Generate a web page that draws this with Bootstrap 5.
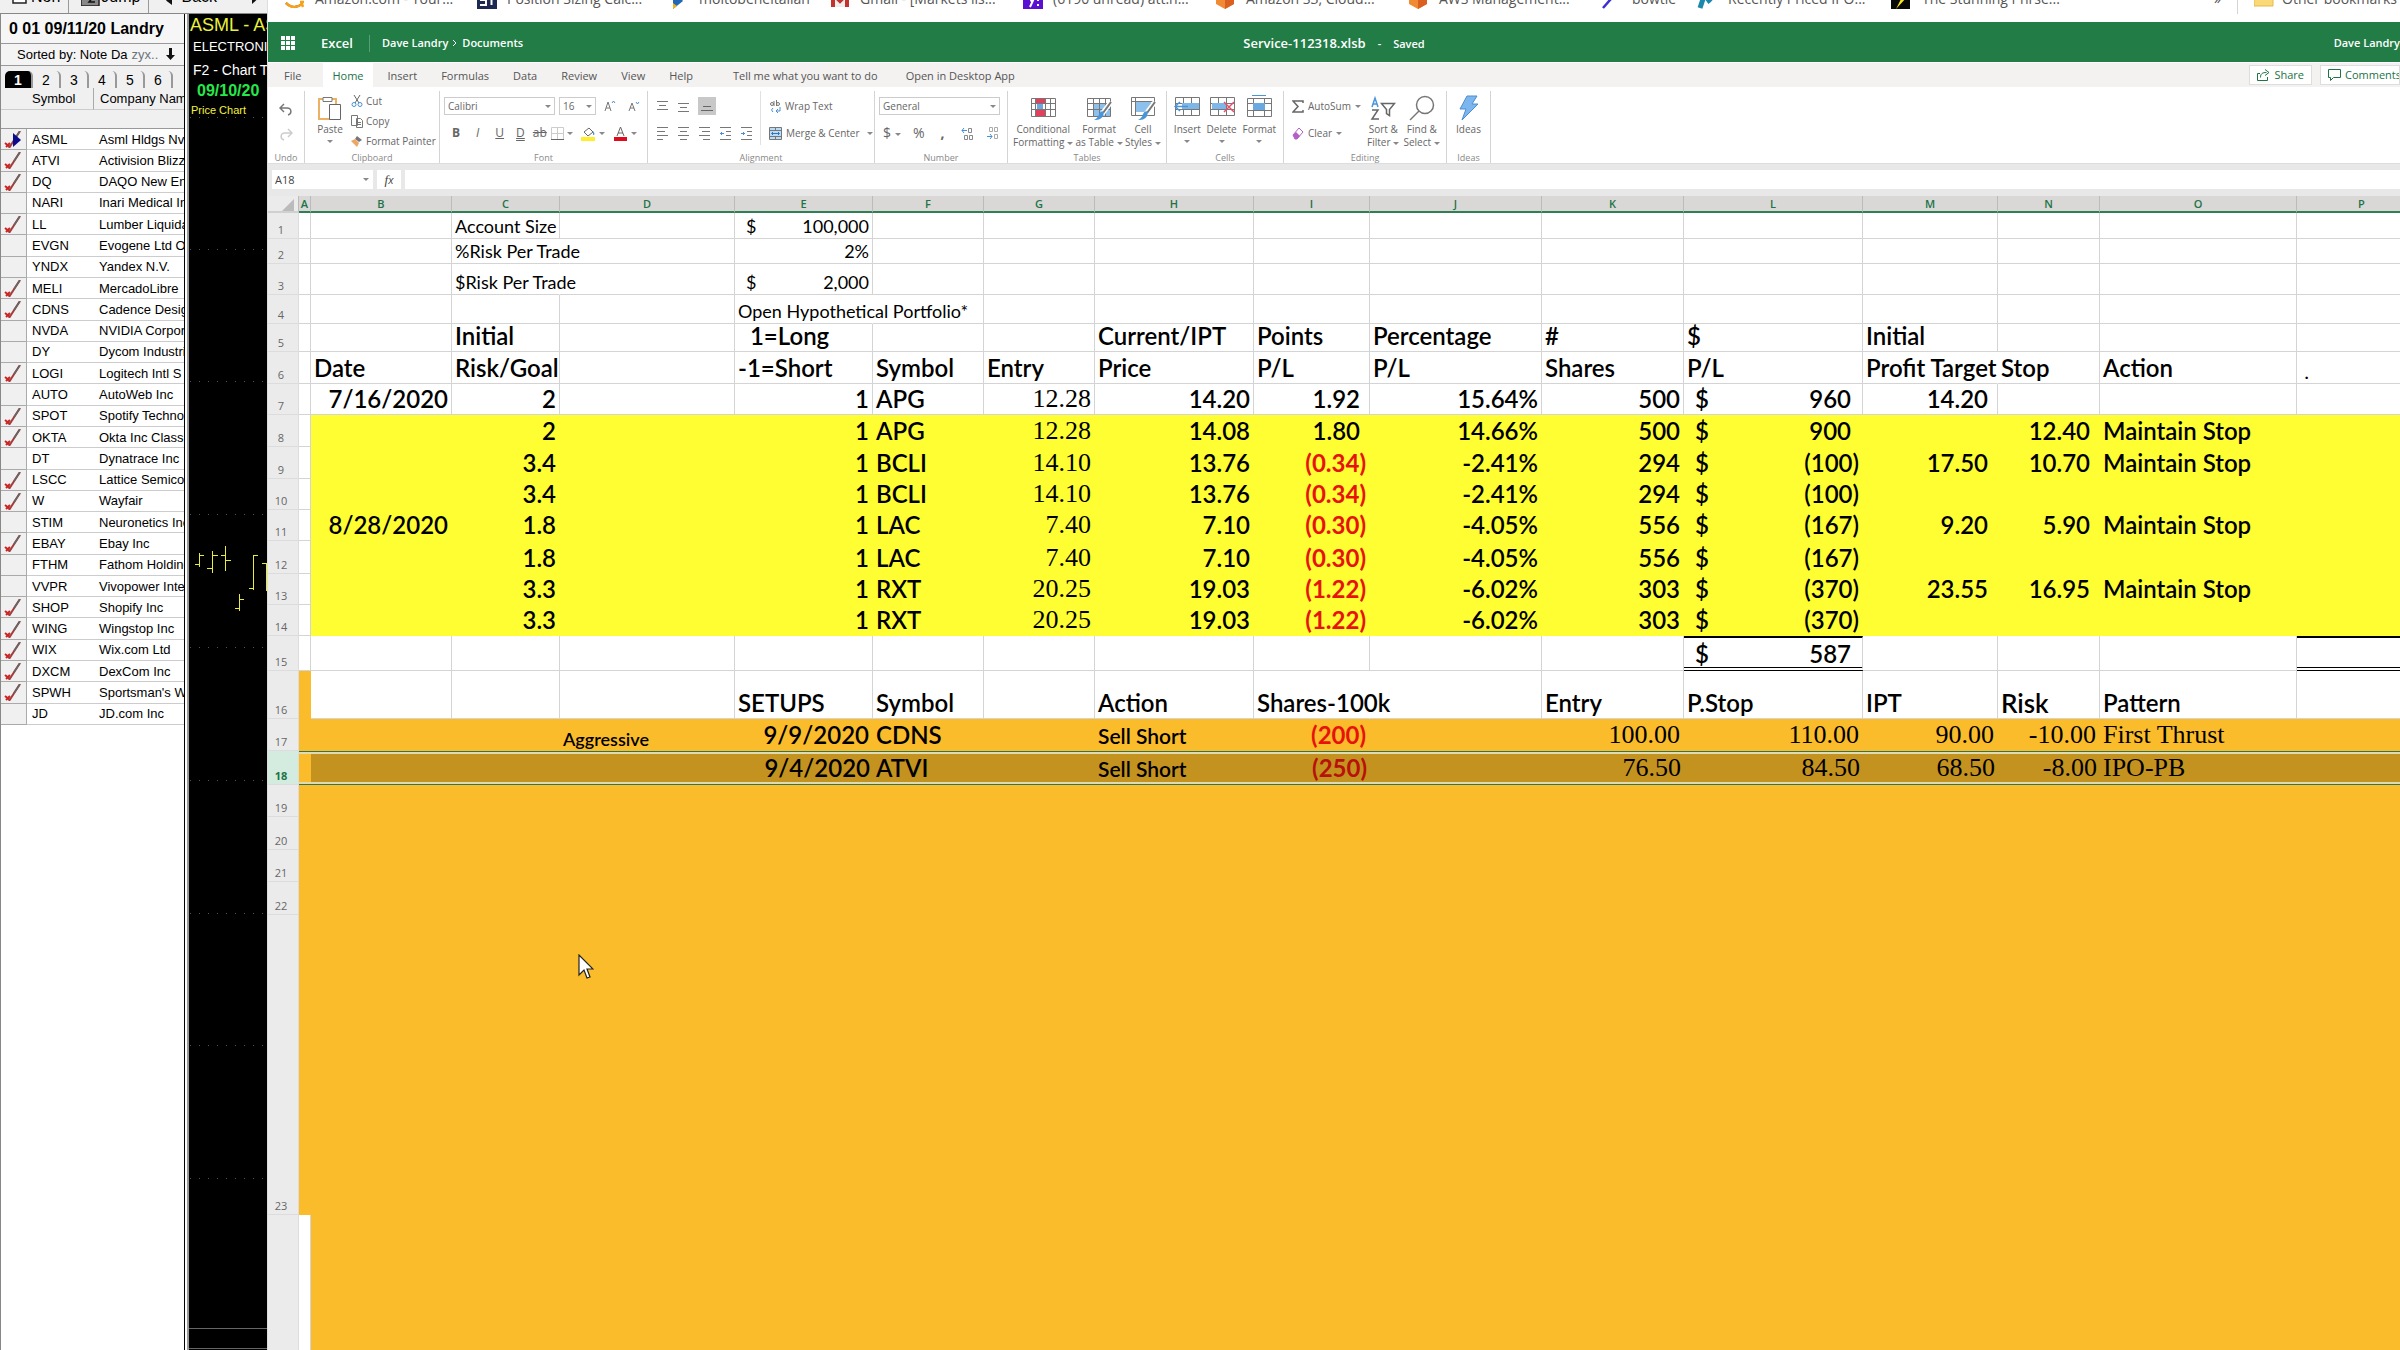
<!DOCTYPE html>
<html lang="en">
<head>
<meta charset="utf-8">
<meta name="viewport" content="width=device-width, initial-scale=1">
<title>Service-112318.xlsb</title>
<link href="https://cdn.jsdelivr.net/npm/bootstrap@5.3.0/dist/css/bootstrap.min.css" rel="stylesheet">
<style>
body{font-family:"Open Sans","Noto Sans",sans-serif;font-size:10px;line-height:12px;color:#444;height:100vh}
a{text-decoration:none;color:inherit}
button,select,input{font:inherit;color:inherit}
svg{flex:none;display:block}
/* charting application, left */
.scan{width:267px;font-family:"Liberation Sans",sans-serif;font-size:13px;color:#000;background:#f0f0f0}
.scan-tools{height:14px;border-bottom:1px solid #888}
.scan-tools>button{border:0;background:none;padding:0;height:18px;line-height:18px;margin-top:-12px;font-size:16px}
.scan-tools>i{width:1px;background:#999}
.scan-list{width:189px;border-left:1px solid #888;border-right:2px solid #999;background:#fff}
.scan-in{width:184px;border-right:1px solid #000}
.scan-title{height:29px;line-height:30px;font-size:16px;background:#f6f6f6}
.scan-sort{height:23px;line-height:22px;border-top:1px solid #999;border-bottom:1px solid #999;background:#f4f4f4}
.scan-pages{height:22px;background:#f0f0f0;font-size:14px}
.scan-pages>button{border:0;background:none;padding:0;width:28px;height:17px;line-height:19px;margin-top:5px;border-right:2px solid #999;border-radius:0 5px 0 0}
.scan-pages>button.on{background:#000;color:#fff;font-weight:bold;border-radius:5px 5px 0 0}
.scan-table{table-layout:fixed;width:183px;border-collapse:separate;border-spacing:0;line-height:16px}
.scan-table th,.scan-table td{padding:0;white-space:nowrap;overflow:hidden;font-weight:400;border-bottom:1px solid #ccc}
.scan-table thead th{background:#f0f0f0;height:22px;line-height:20px}
.scan-table thead tr+tr th{height:19px;border-bottom-color:#999}
.scan-table.rows{height:596px}
.scan-table tbody td{padding-top:1px}
.scan-table tbody td:first-child{background:#f0f0f0;border-right:1px solid #aaa;border-bottom-color:#aaa}
.scan-table td+td,.scan-table th+th{padding-left:5px}
.scan-table td+td+td,.scan-table th+th+th{padding-left:6px}
.scan-table thead tr:first-child th+th+th{border-left:1px solid #aaa}
.chart{background:#000;color:#fff}
.chart>svg{position:absolute;left:0;top:0}
.chart>div{position:relative;white-space:nowrap;overflow:hidden;height:22px;line-height:22px}
.chart .tick-name{color:#eaf03c;font-size:18px;padding-left:1px}
.chart .tick-date{color:#25e84a;font-size:16px}
.chart .tick-kind{color:#f4f23a;font-size:11px;line-height:17px;padding-left:2px}
/* workbook window */
.book{border-left:1px solid #ddd;background:#fff;min-width:0}
.marks{height:22px;font-size:14px;line-height:20px;color:#555;padding-left:15px;white-space:nowrap}
.marks>a{width:193px;height:20px;margin-top:-11px}
.marks>a.mid{width:160px}
.marks>a.short{width:95px}
.marks>a.last{width:146px}
.marks>.more{margin-top:-11px}
.titlebar{height:40px;background:#217c45;color:#fff;font-size:11px;font-weight:600;padding-top:2px}
.titlebar .big{font-size:13px}
.titlebar .dash{padding:0 12px}
.tabs{height:25px;background:#f3f2f1;font-size:11px;line-height:23px;border-top:1px solid #fff}
.tabs .nav-link{padding:0 12px;color:#555;line-height:25px}
.tabs .nav-link.active{background:#fff;color:#217346;padding:0 9px;margin:0 3px 0 10px}
.tabs .act{border:1px solid #ddd;background:#fff;color:#217346;height:20px;line-height:18px;padding:0 7px;margin-top:2px}
.tabs .act.cut{width:80px}
.ribbon{height:77px;border-bottom:1px solid #ddd;color:#666}
.grp{height:72px;margin-top:4px;border-right:1px solid #d4d4d4;display:flex;flex-direction:column}
.grp>small{font-size:9px;line-height:10px;text-align:center;color:#888;margin-top:auto}
.grp button{border:0;background:none;padding:0;white-space:nowrap}
.grp .line{display:flex;gap:3px;height:20px;align-items:center}
.tall{display:flex;flex-direction:column;align-items:center;line-height:13px}
.tall>svg{height:26px;margin-bottom:2px}
.row-a,.row-b{display:flex;align-items:center;height:30px}
.row-b{height:24px}
.car{display:inline-block;border:3px solid transparent;border-top-color:#888;border-bottom:0;vertical-align:middle;margin-left:3px}
.pick{position:relative;display:inline-block}
.pick select,.pick input{appearance:none;border:1px solid #ccc;border-radius:0;background:#fff;height:18px;padding:0 3px;width:100%;display:block}
.pick::after{content:"";position:absolute;right:4px;top:8px;border:3px solid transparent;border-top-color:#888;border-bottom:0}
.pick.face{width:111px}.pick.size{width:37px}.pick.fmt{width:121px}
.glyph button{font-size:12px}
.glyph .dbl{text-decoration:underline double}
.w-undo{width:37px}.w-clip{width:135px}.w-font{width:208px}.w-align{width:227px}.w-num{width:133px}.w-tab{width:159px}.w-cell{width:117px}.w-edit{width:163px}.w-idea{width:44px}
.w-para{width:113px}.w-sum{width:83px}
.numrow{gap:12px;font-size:14px}
.fbar{background:#e8e8e8;padding:6px 0 7px 4px;font-size:11px}
.fbar .pick{width:101px}
.fbar input{border:0!important;height:19px!important;background:#fff}
.fbar button{width:24px;border:0;background:#fff;padding:0}
.fbar button span{font-family:"Liberation Serif",serif;font-size:13px}
/* sheet */
.sheet{table-layout:fixed;width:2159px;border-collapse:separate;border-spacing:0;color:#000;font-family:Lato,"Open Sans",sans-serif;font-size:24px;line-height:24px;font-weight:600}
.sheet th,.sheet td{padding:0 3px 3px;white-space:nowrap;vertical-align:bottom;border-right:1px solid #d4d4d4;border-bottom:1px solid #d4d4d4}
.sheet thead th{height:17px;padding:0;line-height:14px;font-size:11px;font-weight:600;font-family:"Open Sans",sans-serif;text-align:center;background:#d9d8d7;color:#217346;border-right-color:#bbb;border-bottom:2px solid #2f7f55}
.sheet thead th:first-child{background:#ebebeb;border-bottom-color:#d0d0d0}
.sheet tbody th{background:#ebebeb;color:#666;font:400 11px/13px "Open Sans",sans-serif;text-align:center;padding:0 4px 2px 0;border-color:#dcdcdc}
.sheet .sm td{font-size:18px;line-height:22px;font-weight:400;padding-bottom:1px}
.sheet td.sm-t{font-size:18px;line-height:20px;padding-bottom:1px}
.sheet td.md-t{font-size:21px;line-height:22px}
.sheet td.sp{border-right-color:transparent}
.sheet td.yel{background:#fffe33;border-color:#fffe33}
.sheet td.ora{background:#fabc2a;border-color:#fabc2a}
.sheet td.rt{text-align:right}
.sheet td.ac{text-align:right;padding-right:9px}
.sheet td.neg{text-align:right;color:#e8120c;font-weight:700}
.sheet td.ser{font-family:"Liberation Serif",serif;font-size:26px;font-weight:400}
.sheet td.tot{border-top:2px solid #000;border-bottom:4px double #000;padding-bottom:1px}
.sheet td.heavy{font-size:26px;font-weight:600}
.sheet .sel th{background:#d3ecdf;color:#217346;font-weight:700}
.sheet .sel td{border:0;padding-bottom:5px;box-shadow:inset 0 1px #36714a,inset 0 3px #dcddb4,inset 0 -1px #36714a,inset 0 -3px #dcddb4}
.sheet .sel td.drk{background:#c4931f}
.sheet .sel td.neg{color:#b8100a}
.pointer{position:absolute;left:578px;top:954px}
</style>
<script src="https://cdn.jsdelivr.net/npm/bootstrap@5.3.0/dist/js/bootstrap.bundle.min.js"></script>
</head>
<body class="d-flex overflow-hidden position-relative">

<section class="scan d-flex flex-column flex-shrink-0 overflow-hidden">
  <div class="scan-tools d-flex overflow-hidden">
    <button class="d-flex ms-2 ps-1 gap-1"><svg width="15" height="16"><path d="M1 1h13v14H1zM3 5h9M3 8h9M3 11h9" fill="#fff" stroke="#222" stroke-width="1.5"/></svg>Non</button>
    <i class="ms-2"></i>
    <button class="d-flex ms-2 ps-1"><svg width="20" height="18"><path d="M0 6h8V2h10v16H0z" fill="#888" stroke="#222" stroke-width="1.5"/><path d="M8 8h5l-5 6h6" fill="none" stroke="#111" stroke-width="1.5"/></svg>Jump</button>
    <i class="ms-2"></i>
    <button class="d-flex ms-3 gap-2"><svg width="8" height="18"><path d="M7 8v9L1 12.500z" fill="#111"/></svg>Back</button>
    <button class="ms-auto me-2" aria-label="Forward"><svg width="8" height="18"><path d="M1 7v9l5-4.500z" fill="#111"/></svg></button>
  </div>
  <div class="d-flex flex-grow-1">
    <div class="scan-list flex-shrink-0">
      <div class="scan-in overflow-hidden h-100">
        <div class="scan-title fw-bold text-nowrap ps-1"><span class="ms-1">0 01 09/11/20 Landry</span></div>
        <div class="scan-sort d-flex align-items-center ps-3 text-nowrap">Sorted by: Note Da<span class="ps-1 text-secondary">zyx..</span><svg class="ms-2" width="9" height="13"><path d="M3 0h3v7h3L4.500 12 0 7h3z" fill="#111"/></svg></div>
        <div class="scan-pages d-flex ps-1"><button class="on">1</button><button>2</button><button>3</button><button>4</button><button>5</button><button>6</button></div>
        <table class="scan-table">
          <colgroup><col style="width:26px"><col style="width:66px"><col></colgroup>
          <thead><tr><th></th><th>Symbol</th><th>Company Name</th></tr><tr><th></th><th></th><th></th></tr></thead>
        </table>
        <table class="scan-table rows">
          <colgroup><col style="width:26px"><col style="width:66px"><col></colgroup>
          <tbody id="watch"></tbody>
        </table>
      </div>
    </div>
    <div class="chart flex-grow-1 position-relative overflow-hidden">
      <svg width="78" height="1336" fill="none">
        <path d="M0 103.500h78M0 235.500h78M0 367.500h78M0 500.500h78M0 633.500h78M0 766.500h78M0 899.500h78M0 1031.500h78M0 1164.500h78" stroke="#555" stroke-dasharray="1 8" stroke-dashoffset="-1"/>
        <path d="M0 1314.500h78M0 1334.500h78" stroke="#666"/>
        <path d="M10.500 539v14M6 550.500h4M10 541.500h5M23.500 537v22M18 554.500h5M23 541.500h6M36.500 532v25M32 541.500h4M36 546.500h6M50.500 580v17M46 594.500h4M50 585.500h5M64.500 541v35M60 574.500h4M64 541.500h5M73 549.500h5M77.500 549v28" stroke="#e8ec3c"/>
      </svg>
      <div class="tick-name">ASML - ASML</div>
      <div class="ps-1">ELECTRONIC</div>
      <div class="ps-1 fs-6 lh-base"><span class="small">F2 - Chart T</span></div>
      <div class="tick-date ps-2 fw-bold">09/10/20</div>
      <div class="tick-kind">Price Chart</div>
    </div>
  </div>
</section>

<main class="book flex-grow-1 overflow-hidden">
  <nav class="marks d-flex overflow-hidden">
    <a href="#" class="d-flex"><svg class="me-2" width="24" height="20"><path d="M8 8c4-4 9-2 8 2M3 14c5 5 11 5 16 1" fill="none" stroke="#222" stroke-width="2"/><path d="M3 14c5 5 11 5 16 1l1 3M17 13l4 0" fill="none" stroke="#f6a21d" stroke-width="2.500"/></svg>Amazon.com - Your...</a>
    <a href="#" class="d-flex"><svg class="me-2" width="23" height="20"><path d="M1 0h20v20H1z" fill="#1d2b52"/><path d="M10 6H5v5h5v5H4M12 6h7M15.500 6v10" fill="none" stroke="#fff" stroke-width="2"/></svg>Position Sizing Calc...</a>
    <a href="#" class="d-flex mid"><svg class="me-2" width="22" height="20"><path d="M4 0v20l10-8z" fill="#2268b5"/><path d="M4 14v6l4-3z" fill="#f1b31c"/></svg>moltobeneitalian</a>
    <a href="#" class="d-flex"><svg class="me-2" width="23" height="20"><path d="M2 4h18v14H2z" fill="#eee"/><path d="M4 18V5l7 7 7-7v13" fill="none" stroke="#c3322d" stroke-width="4"/></svg>Gmail - [Markets lis...</a>
    <a href="#" class="d-flex"><svg class="me-2" width="23" height="20"><path d="M1 0h20v20H1z" fill="#5b0fd0"/><path d="M6 5l4 8M14 5L8 18M16 5v7M16 15v2" fill="none" stroke="#fff" stroke-width="2"/></svg>(6190 unread) att.n...</a>
    <a href="#" class="d-flex"><svg class="me-2" width="23" height="20"><path d="M10 0l9 4v11l-9 5-9-5V4z" fill="#f08a33"/><path d="M10 9v11l9-5V4z" fill="#d9601f"/></svg>Amazon S3, Cloud...</a>
    <a href="#" class="d-flex"><svg class="me-2" width="23" height="20"><path d="M10 0l9 4v11l-9 5-9-5V4z" fill="#f08a33"/><path d="M10 9v11l9-5V4z" fill="#d9601f"/></svg>AWS Management...</a>
    <a href="#" class="d-flex short"><svg class="me-2" width="23" height="20"><path d="M2 19L16 3" stroke="#3a2fd0" stroke-width="2.500"/></svg>bowtie</a>
    <a href="#" class="d-flex"><svg class="me-2" width="24" height="20"><path d="M4 19L9 4h5q4 4-3 9" fill="none" stroke="#1c88ae" stroke-width="5"/></svg>Recently Priced IPO...</a>
    <a href="#" class="d-flex me-auto"><svg class="me-2" width="25" height="20"><path d="M2 0h19v20H2z" fill="#080808"/><path d="M14 0L8 10h4L7 20l11-12h-4l4-8z" fill="#f7e21c"/></svg>The Stunning Phrse...</a>
    <span class="more pe-3">»</span>
    <span class="vr" style="height:9px"></span>
    <a href="#" class="d-flex ms-3 last"><svg class="me-2" width="20" height="18"><path d="M0 1h8l2 3h9v13H0z" fill="#f9d978" stroke="#e5b94d"/></svg>Other bookmarks</a>
  </nav>

  <header class="titlebar d-flex align-items-center">
    <div class="d-flex align-items-center col">
      <button class="btn p-0 border-0 ms-2 me-4 ps-1 rounded-0" aria-label="App launcher"><svg width="17" height="14" fill="#fff"><path d="M1 0h4v4H1zM6 0h4v4H6zM11 0h4v4h-4zM1 5h4v4H1zM6 5h4v4H6zM11 5h4v4h-4zM1 10h4v4H1zM6 10h4v4H6zM11 10h4v4h-4z"/></svg></button>
      <a href="#" class="big">Excel</a><span class="vr ms-3 me-2" style="height:17px"></span>
      <a href="#" class="ms-1">Dave Landry</a><svg class="mx-1" width="6" height="8"><path d="M1 1l3 3-3 3" stroke="#fff" fill="none"/></svg><a href="#">Documents</a>
    </div>
    <div><span class="big">Service-112318.xlsb</span><span class="dash">-</span>Saved</div>
    <div class="col text-end"><a href="#">Dave Landry</a></div>
  </header>

  <div class="tabs d-flex">
    <nav class="nav flex-nowrap text-nowrap ps-1">
      <a class="nav-link" href="#">File</a><a class="nav-link active" href="#">Home</a><a class="nav-link" href="#">Insert</a><a class="nav-link" href="#">Formulas</a><a class="nav-link" href="#">Data</a><a class="nav-link" href="#">Review</a><a class="nav-link" href="#">View</a><a class="nav-link" href="#">Help</a><a class="nav-link ms-3" href="#">Tell me what you want to do</a><a class="nav-link ms-1" href="#">Open in Desktop App</a>
    </nav>
    <button class="act d-flex gap-1 align-items-center ms-auto me-2"><svg width="13" height="12" fill="none" stroke="#217346"><path d="M3 4.500H.500v7h10V8M3.500 8.500c0-4 2-5 6-5M8 .500l4 3-4 3"/></svg>Share</button>
    <button class="act cut d-flex gap-1 align-items-center pe-0 text-nowrap overflow-hidden"><svg width="13" height="12" fill="none" stroke="#217346"><path d="M.500.500h12v8h-7l-3 3v-3h-2z"/></svg>Comments</button>
  </div>

  <div class="ribbon d-flex">
    <div class="grp w-undo align-items-center">
      <button class="mt-2 pt-1" aria-label="Undo"><svg width="14" height="13" fill="none" stroke="#777" stroke-width="1.500"><path d="M5 1L1 5l4 4M1 5h7c5 0 5 6 1 7"/></svg></button>
      <button class="mt-2 pt-1" aria-label="Redo"><svg width="14" height="13" fill="none" stroke="#ccc" stroke-width="1.500"><path d="M9 1l4 4-4 4M13 5H6C1 5 1 11 5 12"/></svg></button>
      <small>Undo</small>
    </div>
    <div class="grp w-clip">
      <div class="d-flex">
        <button class="tall ms-2 ps-1 mt-1"><svg width="26" height="26" fill="none"><path d="M2 4h17v20H2z" stroke="#eeb062" stroke-width="2"/><path d="M6 2.500h9v4H6z" fill="#fff" stroke="#777"/><path d="M12.500 9.500h11v15h-11z" fill="#fff" stroke="#666"/></svg>Paste<span class="car m-0 mt-1"></span></button>
        <div class="d-flex flex-column align-items-start ms-2">
          <button class="line"><svg width="12" height="12" fill="none"><path d="M3 0l5 8M9 0L4 8" stroke="#666"/><circle cx="3" cy="9.500" r="2" stroke="#4a90d0"/><circle cx="9" cy="9.500" r="2" stroke="#4a90d0"/></svg>Cut</button>
          <button class="line"><svg width="12" height="13" fill="#fff" stroke="#777"><path d="M.500.500h6v10h-6zM5.500 3.500h4l2 2v7h-6zM7 7.500h3M7 9.500h3"/></svg>Copy</button>
          <button class="line"><svg width="12" height="12"><path d="M6 1l5 4-3 2-4-3z" fill="#777"/><path d="M0 6l4-2 4 4-2 4z" fill="#eda665"/></svg>Format Painter</button>
        </div>
      </div>
      <small>Clipboard</small>
    </div>
    <div class="grp w-font">
      <div class="row-a gap-1 ps-1">
        <label class="pick face" aria-label="Font"><select><option>Calibri</option></select></label>
        <label class="pick size" aria-label="Font size"><select><option>16</option></select></label>
        <button class="ms-1" aria-label="Grow font"><svg width="12" height="12" fill="none" stroke="#777"><path d="M1 11l3-9 3 9M2 8h4"/><path d="M8 3l1.500-2L11 3" stroke="#4a90d0"/></svg></button>
        <button class="ms-1 ps-1" aria-label="Shrink font"><svg width="12" height="12" fill="none" stroke="#777"><path d="M1 11l3-8 3 8M2 8h4"/><path d="M8 2l1.500 2L11 2" stroke="#4a90d0"/></svg></button>
      </div>
      <div class="row-b glyph ps-2">
        <button class="fw-bold ps-1 pe-2">B</button><button class="fst-italic px-2">I</button><button class="px-1 ms-1 text-decoration-underline">U</button><button class="px-1 ms-1 dbl">D</button><button class="px-1 text-decoration-line-through">ab</button>
        <button class="d-flex align-items-center" aria-label="Borders"><svg width="13" height="13" fill="none"><path d="M.500.500h12v12M.500.500v12M6.500 0v12M0 6.500h12" stroke="#ccc"/><path d="M0 12.500h13" stroke="#666"/></svg><span class="car"></span></button>
        <button class="d-flex align-items-center ms-2" aria-label="Fill colour"><svg width="15" height="15"><path d="M3 6l5-4 4 4-5 4z" fill="#fff" stroke="#666"/><path d="M12 5q3 4 0 4" fill="#4a90d0"/><path d="M0 11h14v4H0z" fill="#ffee2e"/></svg><span class="car"></span></button>
        <button class="d-flex align-items-center ms-2" aria-label="Font colour"><svg width="15" height="15"><path d="M4 10l3.500-9L11 10M5 7h5" fill="none" stroke="#666"/><path d="M1 11h13v4H1z" fill="#e00b1c"/></svg><span class="car"></span></button>
      </div>
      <small>Font</small>
    </div>
    <div class="grp w-align">
      <div class="d-flex">
        <div class="w-para border-end ps-2">
          <div class="row-a gap-2">
            <button aria-label="Top align"><svg width="13" height="18" stroke="#777"><path d="M1 4.500h11M3 8.500h7M1 12.500h11"/></svg></button>
            <button aria-label="Middle align"><svg width="13" height="18" stroke="#777"><path d="M1 6.500h11M3 10.500h7M1 14.500h11"/></svg></button>
            <button aria-label="Bottom align" style="background:#c8c8c8"><svg width="18" height="18" stroke="#666"><path d="M5 9.500h8M3 13.500h12"/></svg></button>
          </div>
          <div class="row-b gap-2">
            <button aria-label="Left"><svg width="13" height="13" stroke="#777"><path d="M1 .500h11M1 4.500h8M1 8.500h11M1 12.500h6"/></svg></button>
            <button aria-label="Center"><svg width="13" height="13" stroke="#777"><path d="M1 .500h11M3 4.500h7M1 8.500h11M3 12.500h7"/></svg></button>
            <button aria-label="Right"><svg width="13" height="13" stroke="#777"><path d="M1 .500h11M4 4.500h8M1 8.500h11M5 12.500h7"/></svg></button>
            <button aria-label="Decrease indent"><svg width="13" height="13" stroke="#777" fill="none"><path d="M1 .500h11M7 4.500h5M7 8.500h5M1 12.500h11"/><path d="M5 6.500H1M3 5L1.500 6.500 3 8" stroke="#4a90d0"/></svg></button>
            <button aria-label="Increase indent"><svg width="13" height="13" stroke="#777" fill="none"><path d="M1 .500h11M7 4.500h5M7 8.500h5M1 12.500h11"/><path d="M1 6.500h4M3 5l1.500 1.500L3 8" stroke="#4a90d0"/></svg></button>
          </div>
        </div>
        <div class="ps-2 d-flex flex-column align-items-start">
          <button class="row-a gap-1"><svg width="12" height="13" fill="none" stroke="#777"><circle cx="3" cy="4" r="1.500"/><path d="M5 1v5M7.500 0v6"/><circle cx="9" cy="4" r="1.500"/><path d="M4 8q-3 2 0 4M11 7v4H7l2-2M7 11l2 2" stroke="#4a90d0"/></svg>Wrap Text</button>
          <button class="row-b gap-1"><svg width="13" height="13" fill="#bcdcf5" stroke="#777"><path d="M.500.500h12v12H.500zM.500 3.500h12M.500 9.500h12M6.500 0v3M6.500 10v3"/><path d="M3 6.500h7M4 5L2.500 6.500 4 8M9 5l1.500 1.500L9 8" stroke="#2b78c0" fill="none"/></svg>Merge &amp; Center<span class="car"></span></button>
        </div>
      </div>
      <small>Alignment</small>
    </div>
    <div class="grp w-num">
      <div class="row-a ps-1"><label class="pick fmt" aria-label="Number format"><select><option>General</option></select></label></div>
      <div class="row-b numrow ps-2">
        <button>$<span class="car ms-1"></span></button><button>%</button><button class="fw-bold px-1">,</button>
        <button aria-label="Increase decimal"><svg width="13" height="13" fill="none" stroke="#888"><path d="M7.500 1.500h3v4h-3zM3.500 8.500h3v4h-3zM8.500 8.500h3v4h-3z"/><path d="M6 3.500H1M3 1L1 3.500 3 6" stroke="#4a90d0"/></svg></button>
        <button aria-label="Decrease decimal"><svg width="13" height="13" fill="none" stroke="#aaa"><path d="M3.500.500h3v4h-3zM8.500.500h3v4h-3zM8.500 7.500h3v4h-3z"/><path d="M1 9.500h5M4 7l2 2.500L4 12" stroke="#4a90d0"/></svg></button>
      </div>
      <small>Number</small>
    </div>
    <div class="grp w-tab">
      <div class="d-flex justify-content-around px-1 pt-1">
        <button class="tall"><svg width="26" height="26"><path d="M1 3h24v18H1z" fill="#fff"/><path d="M5 3h10v5H5zM5 14h11v7H5z" fill="#e2405c"/><path d="M7 8h6v6H7z" fill="#6aa9e0"/><path d="M1.500 3.500h24v18h-24zM1 8.500h24M1 14.500h24M5.500 3v18M15.500 3v18M20.500 3v18" fill="none" stroke="#777"/></svg><span>Conditional<br>Formatting<i class="car"></i></span></button>
        <button class="tall"><svg width="26" height="26"><path d="M7 8h17v13H7z" fill="#8ec0ec"/><path d="M1.500 3.500h23v18h-23zM1 8.500h23M1 14.500h23M7.500 3v18M13.500 3v18M19.500 3v18" fill="none" stroke="#777"/><path d="M25 7l-9 12" stroke="#fff" stroke-width="5"/><path d="M25 7l-8 11" stroke="#777" stroke-width="2"/><path d="M18 17q-1 9-10 8 4-2 5-6 2-4 5-2z" fill="#4a94d8"/></svg><span>Format<br>as Table<i class="car"></i></span></button>
        <button class="tall"><svg width="26" height="26"><path d="M5 7h16v10H5z" fill="#8ec0ec"/><path d="M1.500 2.500h23v18h-23zM1 6.500h23M5.500 2v18" fill="none" stroke="#777"/><path d="M25 7l-9 12" stroke="#fff" stroke-width="5"/><path d="M25 7l-8 11" stroke="#777" stroke-width="2"/><path d="M18 17q-1 9-10 8 4-2 5-6 2-4 5-2z" fill="#4a94d8"/></svg><span>Cell<br>Styles<i class="car"></i></span></button>
      </div>
      <small>Tables</small>
    </div>
    <div class="grp w-cell">
      <div class="d-flex justify-content-around ps-1 pe-1 pt-1">
        <button class="tall"><svg width="26" height="26"><path d="M1.500 2.500h24v18h-24zM1 8.500h24M1 14.500h24M9.500 2v18M17.500 2v18" fill="#fff" stroke="#777"/><path d="M8 8h17v6H8z" fill="#7db6e8"/><path d="M14 11.500H2M6 7l-5 4.500L6 16" fill="none" stroke="#4a94d8" stroke-width="1.500"/></svg>Insert<i class="car m-0 mt-1"></i></button>
        <button class="tall"><svg width="26" height="26"><path d="M1.500 2.500h24v18h-24zM1 8.500h24M1 14.500h24M9.500 2v18M17.500 2v18" fill="#fff" stroke="#777"/><path d="M3 8h14v6H3z" fill="#7db6e8"/><path d="M15 7l10 10M25 7L15 17" fill="none" stroke="#e2506a" stroke-width="1.500"/></svg>Delete<i class="car m-0 mt-1"></i></button>
        <button class="tall"><svg width="26" height="26"><path d="M1.500 3.500h24v18h-24zM1 8.500h24M1 15.500h24M7.500 3v18M18.500 3v18" fill="#fff" stroke="#777"/><path d="M7 8h12v7H7z" fill="#6aa9e0"/><path d="M6 .500h14" stroke="#4a94d8"/></svg>Format<i class="car m-0 mt-1"></i></button>
      </div>
      <small>Cells</small>
    </div>
    <div class="grp w-edit">
      <div class="d-flex">
        <div class="w-sum ps-2 d-flex flex-column align-items-start">
          <button class="row-a gap-1"><svg width="12" height="13" fill="none" stroke="#666" stroke-width="1.500"><path d="M11 3V1H1l5 5.500L1 12h10v-2"/></svg>AutoSum<span class="car m-0"></span></button>
          <button class="row-b gap-1"><svg width="12" height="13"><path d="M1 8l6-7 4 4-6 7H3z" fill="#fff" stroke="#b45fc4"/><path d="M1 8l3-3 4 4-3 3H3z" fill="#b45fc4"/></svg>Clear<span class="car m-0"></span></button>
        </div>
        <button class="tall pt-1"><svg width="26" height="26" fill="none" stroke-width="1.500"><path d="M2 12L5 3l3 9M3 9h4" stroke="#4a94d8"/><path d="M2 15h6l-6 9h7" stroke="#666"/><path d="M11.500 8.500h13l-5 6v6l-3-2v-4z" stroke="#666"/></svg><span>Sort &amp;<br>Filter<i class="car"></i></span></button>
        <button class="tall pt-1 ms-1"><svg width="26" height="26" fill="none" stroke="#777" stroke-width="1.500"><circle cx="16" cy="10" r="8.500"/><path d="M10 16l-9 9"/></svg><span>Find &amp;<br>Select<i class="car"></i></span></button>
      </div>
      <small>Editing</small>
    </div>
    <div class="grp w-idea">
      <button class="tall pt-1"><svg width="20" height="26"><path d="M8 1h10l-5 8h6L3 25l4-11H1z" fill="#7db6ee" stroke="#4a8fd0"/></svg>Ideas</button>
      <small>Ideas</small>
    </div>
  </div>

  <div class="fbar d-flex gap-1">
    <label class="pick" aria-label="Name box"><input value="A18"></label>
    <button class="fst-italic" aria-label="Insert function"><span>f</span>x</button>
    <input class="flex-grow-1" aria-label="Formula bar">
  </div>

  <table class="sheet">
    <colgroup id="cols"></colgroup>
    <thead><tr id="letters"></tr></thead>
    <tbody id="cells"></tbody>
  </table>
</main>

<svg class="pointer" width="16" height="26"><path d="M1 1v20l5-5 3 8 3-1-3-8h6z" fill="#fff" stroke="#222" stroke-width="1.200"/></svg>

<script>
const watch = [["ASML","Asml Hldgs Nv",2],["ATVI","Activision Blizzard",1],["DQ","DAQO New Energy",1],["NARI","Inari Medical Inc",0],["LL","Lumber Liquidators",1],["EVGN","Evogene Ltd Ord",0],["YNDX","Yandex N.V.",0],["MELI","MercadoLibre",1],["CDNS","Cadence Design",1],["NVDA","NVIDIA Corporation",0],["DY","Dycom Industries",0],["LOGI","Logitech Intl S A",1],["AUTO","AutoWeb Inc",0],["SPOT","Spotify Technology",1],["OKTA","Okta Inc Class A",1],["DT","Dynatrace Inc",0],["LSCC","Lattice Semicond",1],["W","Wayfair",1],["STIM","Neuronetics Inc",0],["EBAY","Ebay Inc",1],["FTHM","Fathom Holdings",0],["VVPR","Vivopower Intern",0],["SHOP","Shopify Inc",1],["WING","Wingstop Inc",1],["WIX","Wix.com Ltd",1],["DXCM","DexCom Inc",1],["SPWH","Sportsman's Ware",1],["JD","JD.com Inc",0]];
const tick = '<path d="M4 12l5 4M5 16l4-4" stroke="#c22" stroke-width="2"/><path d="M8 17L19 0" stroke="#a33b3b" stroke-width="2"/><path d="M13 9L19 0" stroke="#666" stroke-width="1.500"/>';
document.getElementById('watch').innerHTML = watch.map(([s, n, t]) =>
  `<tr><td><svg width="24" height="17">${t ? tick : ''}${t > 1 ? '<path d="M12 2l8 7-8 7z" fill="#0a0a8c"/>' : ''}</svg></td><td>${s}</td><td>${n}</td></tr>`).join('');

const letters = 'ABCDEFGHIJKLMNOP'.split('');
const widths = [12,141,108,175,138,111,111,159,116,172,142,179,135,102,197,130];
document.getElementById('cols').innerHTML = '<col style="width:31px">' + widths.map(w => `<col style="width:${w}px">`).join('');
document.getElementById('letters').innerHTML = '<th><svg class="ms-auto me-1" width="12" height="12"><path d="M12 0v12H0z" fill="#bbb"/></svg></th>' + letters.map(l => `<th>${l}</th>`).join('');

/* each row: height, row class, cells as column -> "classes|text"; "$" before a value puts the sign at the left edge */
const trade = (h, c, sym, entry, price, pl, pct, sh, val, more) => [h, 'y', Object.assign({C:'rt|'+c, E:'rt|1', F:'|'+sym, G:'rt ser|'+entry, H:'rt|'+price, I:(pl[0]==='('?'neg|':'ac|')+pl, J:'rt|'+pct, K:'rt|'+sh, L:'|$'+val}, more)];
const rows = [
  [26,'sm',{C:'|Account Size',E:'|$100,000'}],
  [25,'sm',{C:'sp|%Risk Per Trade',E:'rt|2%'}],
  [31,'sm',{C:'sp|&#36;Risk Per Trade',E:'|$2,000'}],
  [29,'sm',{E:'sp|Open Hypothetical Portfolio*'}],
  [28,'',{C:'|Initial',E:'|&nbsp; 1=Long',H:'|Current/IPT',I:'|Points',J:'|Percentage',K:'|#',L:'|&#36;',M:'|Initial'}],
  [32,'',{B:'|Date',C:'|Risk/Goal',E:'|-1=Short',F:'|Symbol',G:'|Entry',H:'|Price',I:'|P/L',J:'|P/L',K:'|Shares',L:'|P/L',M:'sp|Profit Target',N:'|Stop',O:'|Action',P:'sm-t|&nbsp;.'}],
  trade(31,'2','APG','12.28','14.20','1.92','15.64%','500','960',{B:'rt|7/16/2020',M:'ac|14.20'}),
  trade(32,'2','APG','12.28','14.08','1.80','14.66%','500','900',{N:'ac|12.40',O:'|Maintain Stop'}),
  trade(32,'3.4','BCLI','14.10','13.76','(0.34)','-2.41%','294','(100)',{M:'ac|17.50',N:'ac|10.70',O:'|Maintain Stop'}),
  trade(31,'3.4','BCLI','14.10','13.76','(0.34)','-2.41%','294','(100)'),
  trade(31,'1.8','LAC','7.40','7.10','(0.30)','-4.05%','556','(167)',{B:'rt|8/28/2020',M:'ac|9.20',N:'ac|5.90',O:'|Maintain Stop'}),
  trade(33,'1.8','LAC','7.40','7.10','(0.30)','-4.05%','556','(167)'),
  trade(31,'3.3','RXT','20.25','19.03','(1.22)','-6.02%','303','(370)',{M:'ac|23.55',N:'ac|16.95',O:'|Maintain Stop'}),
  trade(31,'3.3','RXT','20.25','19.03','(1.22)','-6.02%','303','(370)'),
  [35,'',{L:'tot|$587',P:'tot|'}],
  [48,'',{A:'ora|',E:'|SETUPS',F:'|Symbol',H:'|Action',I:'sp|Shares-100k',K:'|Entry',L:'|P.Stop',M:'|IPT',N:'heavy|Risk',O:'|Pattern'}],
  [32,'o',{D:'sm-t|Aggressive',E:'rt|9/9/2020',F:'|CDNS',H:'md-t|Sell Short',I:'neg|(200)',K:'rt ser|100.00',L:'rt ser|110.00',M:'rt ser|90.00',N:'rt ser|-10.00',O:'ser|First Thrust'}],
  [34,'sel',{E:'rt|9/4/2020',F:'|ATVI',H:'md-t|Sell Short',I:'neg|(250)',K:'rt ser|76.50',L:'rt ser|84.50',M:'rt ser|68.50',N:'rt ser|-8.00',O:'ser|IPO-PB'}],
  [32,'o',{}],[33,'o',{}],[32,'o',{}],[33,'o',{}],[300,'o',{}],[200,'o',{A:'|'}]
];
document.getElementById('cells').innerHTML = rows.map(([h, kind, data], i) => {
  const tds = letters.map(l => {
    const [cls, text = ''] = (data[l] || '|').split('|');
    let fill = '';
    if (kind === 'y' && i > 6 && l !== 'A') fill = 'yel';
    if (kind === 'o' && !(l === 'A' && data.A)) fill = 'ora';
    if (kind === 'sel') fill = l === 'A' ? 'ora' : 'drk';
    const acct = text[0] === '$';
    const pad = text.endsWith(')') ? '' : kind === 'sm' ? '' : 'pe-2';
    const body = acct ? `<div class="d-flex justify-content-between ps-1"><span class="ps-1">$</span><span class="${pad}">${text.slice(1)}</span></div>` : text;
    return `<td class="${cls} ${fill}">${body}</td>`;
  }).join('');
  return `<tr class="${kind}" style="height:${h}px"><th>${i < 23 ? i + 1 : ''}</th>${tds}</tr>`;
}).join('');
</script>
</body>
</html>
